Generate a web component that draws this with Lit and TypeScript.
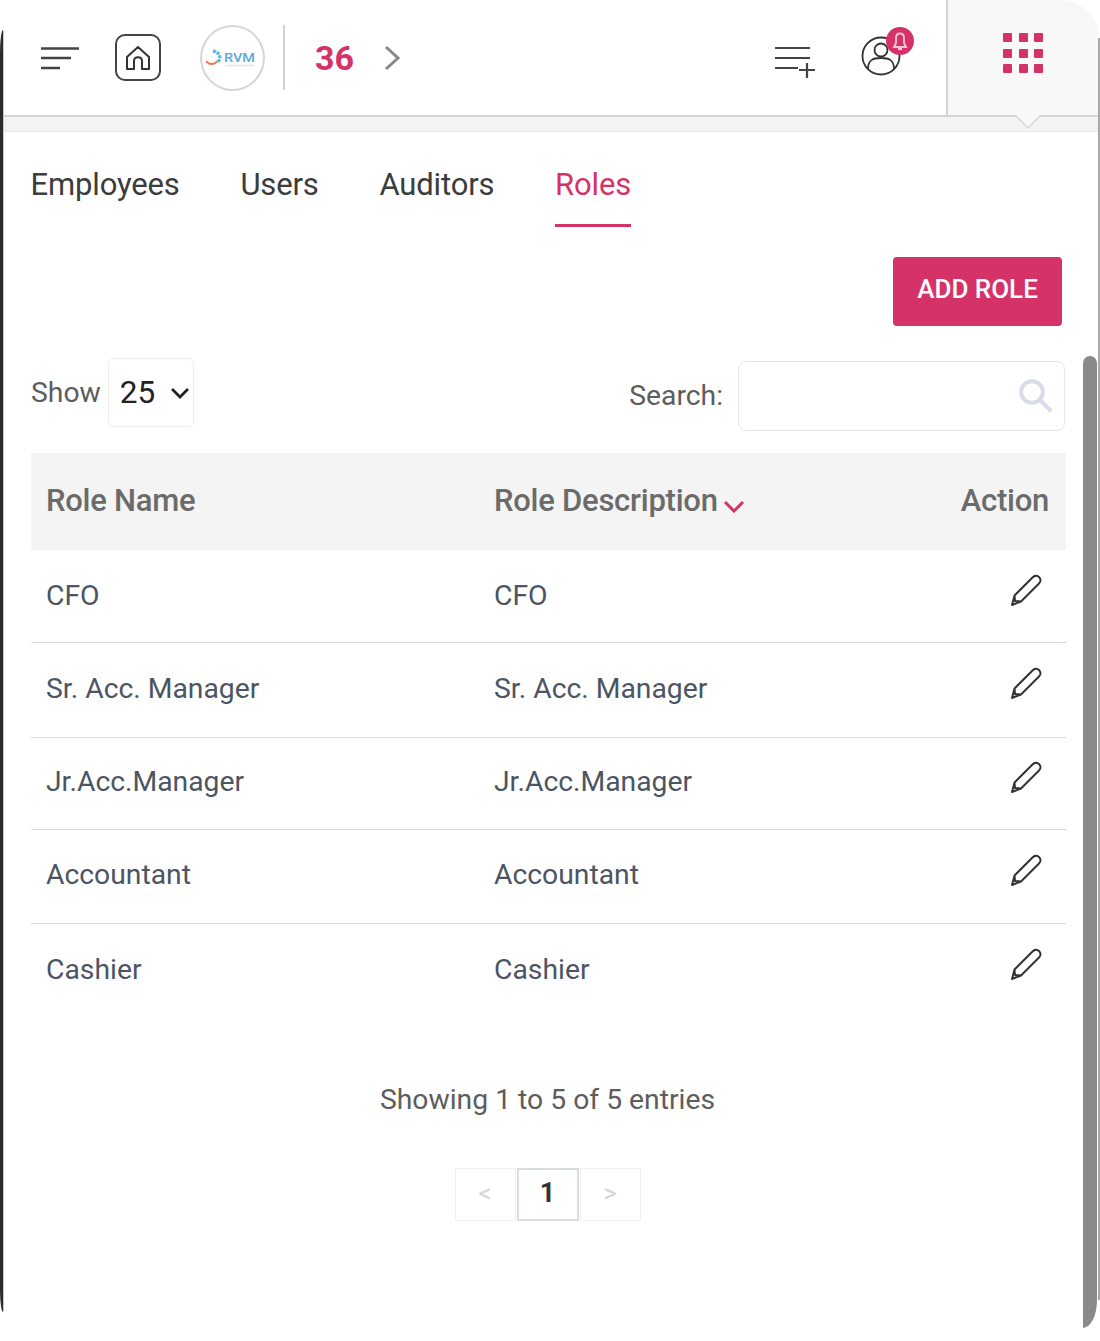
import { LitElement, html, css, svg } from 'lit';
import { customElement } from 'lit/decorators.js';

const roles = ['CFO', 'Sr. Acc. Manager', 'Jr.Acc.Manager', 'Accountant', 'Cashier'];
const rowHeights = [93, 95, 92, 94, 94];

const pencil = svg`<path d="M4 32 L6.5 22.5 L24.5 4.5 C26.5 2.5 29 2 31 4 C33 6 33 8.5 31 10.5 L13 28.5 Z M6.5 22.5 L7 28 L13 28.5" fill="none" stroke="#333" stroke-width="2" stroke-linejoin="round"/>`;

@customElement('app-root')
export class AppRoot extends LitElement {
  static styles = css`
    :host {
      display: block;
      width: 1100px;
      height: 1341px;
      position: relative;
      overflow: hidden;
      background: #fff;
      font-family: Roboto, sans-serif;
    }
    .frame {
      height: 1330px;
      box-sizing: border-box;
      padding-left: 3px;
      display: flex;
      flex-direction: column;
    }
    .edge-l {
      position: absolute;
      left: 0;
      top: 30px;
      width: 3px;
      height: 1282px;
      background: #2b2b2b;
      border-radius: 3px 0 0 3px / 24px 0 0 24px;
      box-shadow: 1px 0 0 #c8c8c8;
    }
    .edge-r {
      position: absolute;
      left: 1098px;
      top: 38px;
      width: 2px;
      height: 1262px;
      background: #a8a8a8;
    }
    .top {
      height: 115px;
      display: flex;
      align-items: stretch;
      flex: none;
    }
    .left {
      flex: 1;
      display: flex;
      align-items: center;
      padding-left: 38px;
    }
    .menu { width: 38px; height: 24px; }
    .home {
      width: 46px;
      height: 47px;
      margin-left: 36px;
      box-sizing: border-box;
      border: 2px solid #444;
      border-radius: 10px;
      display: flex;
      align-items: center;
      justify-content: center;
    }
    .logo {
      width: 65px;
      height: 66px;
      margin-left: 39px;
      border: 2px solid #d5d5d5;
      border-radius: 50%;
      box-sizing: border-box;
      display: flex;
      align-items: center;
      justify-content: center;
    }
    .sep {
      width: 2px;
      height: 65px;
      margin-left: 18px;
      background: #d2d2d2;
    }
    .count {
      margin-left: 30px;
      font-size: 34px;
      font-weight: 700;
      color: #d53368;
    }
    .chev { margin-left: 29px; width: 18px; height: 28px; }
    .addlist { width: 42px; height: 36px; margin-right: 44px; margin-top: 4px; align-self: center; }
    .user { width: 54px; height: 50px; margin-right: 31px; margin-top: -12px; align-self: center; }
    .apps {
      width: 154px;
      flex: none;
      background: #f8f8f8;
      border-left: 2px solid #d4d4d4;
      border-top-right-radius: 40px;
      box-sizing: border-box;
      display: flex;
      justify-content: center;
      padding-top: 33px;
      padding-right: 2px;
    }
    .dots {
      display: grid;
      grid-template-columns: repeat(3, 9px);
      grid-auto-rows: 9px;
      gap: 6.6px;
      width: max-content;
      height: max-content;
    }
    .dots span { background: #d53368; border-radius: 1px; }
    .strip {
      height: 14px;
      flex: none;
      background: #f3f3f3;
      border-top: 2px solid #d4d4d4;
      border-bottom: 1px solid #e8e8e8;
    }
    .notch {
      position: absolute;
      left: 1016px;
      top: 105px;
      width: 24px;
      height: 24px;
      overflow: visible;
    }
    .tabs {
      display: flex;
      gap: 60.7px;
      padding: 0 0 0 27.5px;
      height: 95px;
      flex: none;
      box-sizing: border-box;
    }
    .tab {
      font-size: 31px;
      letter-spacing: -0.15px;
      color: #3c3c3c;
      padding-top: 34px;
      box-sizing: border-box;
    }
    .tab.on {
      color: #d53368;
      border-bottom: 3px solid #d53368;
    }
    .main { padding: 0 34px 0 28px; }
    .actions { display: flex; justify-content: flex-end; padding: 30px 4px 0 0; height: 119px; box-sizing: border-box; }
    .add {
      width: 169px;
      height: 69px;
      padding-bottom: 5px;
      background: #d53368;
      border-radius: 4px;
      color: #fff;
      font-size: 26px;
      font-weight: 500;
      display: flex;
      align-items: center;
      justify-content: center;
      box-sizing: border-box;
    }
    .tools {
      display: flex;
      justify-content: space-between;
      align-items: center;
      height: 107px;
      box-sizing: border-box;
      padding: 0 1px 14px 0;
    }
    .show, .search { display: flex; align-items: center; color: #5d5d5d; font-size: 28.3px; }
    .select {
      width: 86px;
      height: 69px;
      margin-left: 7px;
      box-sizing: border-box;
      border: 1.5px solid #ececec;
      border-radius: 6px;
      color: #222;
      font-size: 31.5px;
      display: flex;
      align-items: center;
      padding-left: 11px;
      gap: 15px;
    }
    .search { margin-top: 6px; }
    .box {
      width: 327px;
      height: 70px;
      margin-left: 15px;
      box-sizing: border-box;
      border: 1.5px solid #e2e5ea;
      border-radius: 8px;
      display: flex;
      align-items: center;
      justify-content: flex-end;
      padding-right: 11px;
    }
    .row {
      display: grid;
      grid-template-columns: 448px 1fr auto;
      align-items: center;
      padding: 0 17px 2px 15px;
      box-sizing: border-box;
      font-size: 28.3px;
      color: #4b5563;
    }
    .head {
      height: 97px;
      background: #f4f4f4;
      color: #6b6b6b;
      font-size: 31px;
      font-weight: 500;
      letter-spacing: -0.25px;
    }
    .sort { display: inline-block; margin-left: 5px; vertical-align: -2px; }
    .body { border-bottom: 1.5px solid #d8dbdf; }
    .body + .body { padding-bottom: 4px; }
    .body:last-child { border-bottom: none; }
    .body svg { width: 36px; height: 36px; margin: -8px 5px 0 0; display: block; }
    .info {
      text-align: center;
      font-size: 28.3px;
      color: #5d5d5d;
      margin-top: 65px;
      padding-right: 2px;
    }
    .pager {
      display: flex;
      justify-content: center;
      gap: 1px;
      margin-top: 52px;
      padding-right: 2px;
    }
    .pager span {
      width: 61px;
      height: 53px;
      border: 1.5px solid #f0f0f2;
      box-sizing: border-box;
      display: flex;
      align-items: center;
      justify-content: center;
      padding-bottom: 3px;
      font-size: 26px;
      color: #d5d7db;
    }
    .pager span.cur {
      width: 62px;
      border: 2px solid #d8dde4;
      color: #333;
      font-weight: 700;
      font-size: 27px;
    }
    .bar {
      position: absolute;
      left: 1083px;
      top: 356px;
      width: 14px;
      height: 972px;
      background: #8a8a8a;
      border-radius: 7px 7px 14px 0 / 7px 7px 28px 0;
    }
  `;

  render() {
    return html`
      <div class="frame">
        <div class="top">
          <div class="left">
            <svg class="menu" viewBox="0 0 38 24">
              <path d="M0 2.5H38M0 12H30M0 22H19" stroke="#444" stroke-width="2.4" fill="none"/>
            </svg>
            <div class="home">
              <svg width="26" height="26" viewBox="0 0 26 26">
                <path d="M2 12 L13 2 L24 12 V24 H17 V16 C17 11 9 11 9 16 V24 H2 Z" fill="none" stroke="#333" stroke-width="2" stroke-linejoin="round"/>
              </svg>
            </div>
            <div class="logo">
              <svg width="54" height="20" viewBox="0 0 54 20">
                <path d="M0 13 C3 17 9 17 11 13" fill="none" stroke="#f0764f" stroke-width="1.8"/>
                <path d="M7 3 C13 4 16 9 12 14" fill="none" stroke="#5cb8e8" stroke-width="3.4" stroke-dasharray="3 1"/>
                <text x="18" y="14" font-family="Roboto, sans-serif" font-size="12" font-weight="500" fill="#5aa8d8" textLength="31" lengthAdjust="spacingAndGlyphs">RVM</text>
                <path d="M19 17.5H48" stroke="#dfe6ea" stroke-width="1.5"/>
              </svg>
            </div>
            <div class="sep"></div>
            <div class="count">36</div>
            <svg class="chev" viewBox="0 0 18 28">
              <path d="M3 3 L15 14 L3 25" fill="none" stroke="#888" stroke-width="3"/>
            </svg>
          </div>
          <svg class="addlist" viewBox="0 0 42 36">
            <path d="M0 6H35M0 16H35M0 26H23M24 28H40M32 21V36" fill="none" stroke="#444" stroke-width="2.2"/>
          </svg>
          <svg class="user" viewBox="0 0 54 50">
            <circle cx="20" cy="29" r="18.5" fill="none" stroke="#333" stroke-width="1.8"/>
            <circle cx="20" cy="23" r="6.5" fill="none" stroke="#333" stroke-width="1.8"/>
            <path d="M7 42 C7 33 12 31 20 31 C28 31 33 33 33 42" fill="none" stroke="#333" stroke-width="1.8"/>
            <circle cx="39" cy="14" r="14" fill="#d53368"/>
            <path d="M33 20 H45 L43 16 V11 C43 5 35 5 35 11 V16 Z M37 22 H41" fill="none" stroke="#f6c9d8" stroke-width="1.8"/>
          </svg>
          <div class="apps">
            <div class="dots">${Array.from({ length: 9 }, () => html`<span></span>`)}</div>
          </div>
        </div>
        <div class="strip"></div>
        <div class="tabs">
          <div class="tab">Employees</div>
          <div class="tab">Users</div>
          <div class="tab">Auditors</div>
          <div class="tab on">Roles</div>
        </div>
        <div class="main">
          <div class="actions"><div class="add">ADD ROLE</div></div>
          <div class="tools">
            <div class="show">
              Show
              <div class="select">
                25
                <svg width="20" height="12" viewBox="0 0 20 12">
                  <path d="M2 2 L10 10 L18 2" fill="none" stroke="#222" stroke-width="2.8"/>
                </svg>
              </div>
            </div>
            <div class="search">
              Search:
              <div class="box">
                <svg width="34" height="34" viewBox="0 0 34 34">
                  <circle cx="13" cy="13" r="10.8" fill="none" stroke="#d8dce6" stroke-width="4"/>
                  <path d="M22 22 L31 31" stroke="#d8dce6" stroke-width="4" stroke-linecap="round"/>
                </svg>
              </div>
            </div>
          </div>
          <div class="row head">
            <div>Role Name</div>
            <div>Role Description<svg class="sort" width="22" height="13" viewBox="0 0 22 13"><path d="M2 2 L11 11 L20 2" fill="none" stroke="#d53368" stroke-width="3"/></svg></div>
            <div>Action</div>
          </div>
          <div class="rows">
            ${roles.map(
              (r, i) => html`
                <div class="row body" style="height:${rowHeights[i]}px">
                  <div>${r}</div>
                  <div>${r}</div>
                  <svg viewBox="0 0 36 36">${pencil}</svg>
                </div>
              `
            )}
          </div>
          <div class="info">Showing 1 to 5 of 5 entries</div>
          <div class="pager">
            <span>&lt;</span>
            <span class="cur">1</span>
            <span>&gt;</span>
          </div>
        </div>
      </div>
      <svg class="notch" viewBox="0 0 24 24">
        <path d="M0 10 L12 23 L24 10 Z" fill="#f8f8f8"/>
        <path d="M0 11 L12 23 L24 11" fill="none" stroke="#d9d9d9" stroke-width="1.5"/>
      </svg>
      <div class="edge-l"></div>
      <div class="edge-r"></div>
      <div class="bar"></div>
    `;
  }
}
